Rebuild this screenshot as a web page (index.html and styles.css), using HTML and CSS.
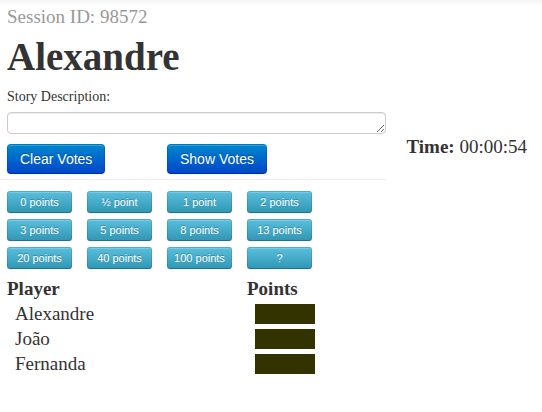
FILE: index.html
```html
<!DOCTYPE html>
<html lang="en">
<head>
<meta charset="utf-8">
<title>Planning session</title>
<link rel="stylesheet" href="styles.css">
</head>
<body>
<div class="page">
  <main class="session">
    <header class="intro">
      <p class="session-id">Session ID: 98572</p>
      <h1>Alexandre</h1>
    </header>
    <form class="story">
      <label for="story">Story Description:</label>
      <textarea id="story" rows="1"></textarea>
      <div class="actions">
        <button type="button" class="btn btn-primary">Clear Votes</button>
        <button type="button" class="btn btn-primary">Show Votes</button>
      </div>
    </form>
    <hr>
    <div class="cards">
      <button type="button" class="btn btn-card">0 points</button>
      <button type="button" class="btn btn-card">½ point</button>
      <button type="button" class="btn btn-card">1 point</button>
      <button type="button" class="btn btn-card">2 points</button>
      <button type="button" class="btn btn-card">3 points</button>
      <button type="button" class="btn btn-card">5 points</button>
      <button type="button" class="btn btn-card">8 points</button>
      <button type="button" class="btn btn-card">13 points</button>
      <button type="button" class="btn btn-card">20 points</button>
      <button type="button" class="btn btn-card">40 points</button>
      <button type="button" class="btn btn-card">100 points</button>
      <button type="button" class="btn btn-card">?</button>
    </div>
    <table class="votes">
      <thead>
        <tr><th scope="col" class="player">Player</th><th scope="col">Points</th></tr>
      </thead>
      <tbody>
        <tr><td>Alexandre</td><td><div class="hidden-vote"></div></td></tr>
        <tr><td>João</td><td><div class="hidden-vote"></div></td></tr>
        <tr><td>Fernanda</td><td><div class="hidden-vote"></div></td></tr>
      </tbody>
    </table>
  </main>
  <aside class="timer"><strong>Time:</strong> 00:00:54</aside>
</div>
</body>
</html>
```

FILE: styles.css
```css
* {
  box-sizing: border-box;
}

body {
  margin: 0;
  background: linear-gradient(#f5f5f5, #fff 6px) no-repeat #fff;
  color: #333;
  font: 14px/20px "Liberation Serif", serif;
}

.page {
  display: flex;
  gap: 20px;
  padding-right: 15px;
}

.session {
  flex: 1;
  min-width: 0;
}

.intro,
.story,
.cards,
.votes {
  margin-left: 7px;
}

.session-id {
  margin: 0;
  padding-top: 4px;
  color: #999;
  font-size: 19px;
  line-height: 25px;
}

h1 {
  margin: 8px 0 10px;
  font-size: 39px;
  line-height: 40px;
}

.story label {
  display: block;
  margin-bottom: 5px;
}

.story textarea {
  display: block;
  width: 100%;
  height: 22px;
  margin: 0;
  padding: 0 6px;
  overflow: hidden;
  border: 1px solid #ccc;
  border-radius: 4px;
  background: #fff;
  box-shadow: inset 0 1px 1px rgba(0, 0, 0, 0.08);
  color: #555;
  font: 14px/20px "Liberation Sans", sans-serif;
  resize: vertical;
}

.actions {
  display: grid;
  grid-template-columns: 160px 1fr;
  justify-items: start;
  margin-top: 10px;
}

.btn {
  border: 1px solid;
  border-color: rgba(0, 0, 0, 0.1) rgba(0, 0, 0, 0.1) rgba(0, 0, 0, 0.25);
  box-shadow: inset 0 1px 0 rgba(255, 255, 255, 0.2), 0 1px 2px rgba(0, 0, 0, 0.05);
  color: #fff;
  font-family: "Liberation Sans", sans-serif;
  text-align: center;
  text-shadow: 0 -1px 0 rgba(0, 0, 0, 0.25);
  cursor: pointer;
}

.btn-primary {
  padding: 4px 12px;
  border-radius: 4px;
  background: linear-gradient(#08c, #04c) border-box;
  font-size: 14px;
  line-height: 20px;
}

.btn-card {
  padding: 0;
  border-radius: 3px;
  background: linear-gradient(#5bc0de, #2f96b4) border-box;
  font-size: 11px;
  line-height: 20px;
}

hr {
  margin: 5px 0 11px;
  border: 0;
  border-top: 1px solid #eee;
}

.cards {
  display: grid;
  grid-template-columns: repeat(4, 65px);
  gap: 6px 15px;
}

.votes {
  margin-top: 7px;
  border-collapse: collapse;
  font-size: 19px;
  line-height: 25px;
}

.votes th,
.votes td {
  padding: 0;
  text-align: left;
}

.votes td {
  padding-left: 8px;
}

.player {
  width: 240px;
}

.hidden-vote {
  width: 60px;
  height: 20px;
  background: #330;
}

.timer {
  padding-top: 134px;
  font-size: 19px;
  line-height: 25px;
  white-space: nowrap;
}
```
